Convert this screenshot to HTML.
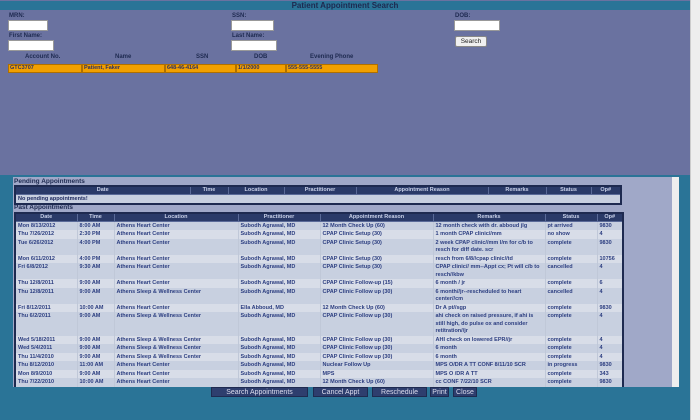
<!DOCTYPE html>
<html><head><meta charset="utf-8"><style>
*{margin:0;padding:0;box-sizing:border-box}
body{width:700px;height:420px;background:#2a7497;position:relative;overflow:hidden;font-family:"Liberation Sans",sans-serif;font-weight:bold;color:#2c3e80}
.a{position:absolute}
#top{left:0;top:0;width:690px;height:175px;background:#6a72a0}
#title{left:0;top:1px;width:690px;height:9px;background:#2a7497;text-align:center;font-size:8px;line-height:9px;color:#1e2a50}
.lbl{font-size:6px;color:#1e2a50}
.inp{background:#fff;border:1px solid #999}
#vs{left:690px;top:0;width:10px;height:420px;background:#eeeeee;border-left:1px solid #ccc}
.or{position:absolute;top:64px;height:9px;background:#f2a000;border:1px solid #b07000;font-size:5.5px;line-height:7px;padding-left:1px;color:#2c3060}
#bot{left:13px;top:177px;width:659px;height:210px;background:#a0a8c8;overflow:hidden}
#bs{left:672px;top:177px;width:7px;height:210px;background:#eeeeee}
table{border-collapse:collapse;table-layout:fixed;position:absolute;font-size:5.5px}
th{background:#2a3a68;color:#c8d0e8;border:1px solid #5a6a98;height:8px;line-height:6px;font-weight:bold}
td{border-left:1px solid #c0c8d8;padding:1px 2px 0;line-height:7.5px;height:8.5px;vertical-align:top;color:#2c3e80}
tr.o td{background:#c8d0e0} tr.e td{background:#d8dde8}
.btn{position:absolute;top:387px;height:10px;background:#2e3e6e;color:#dde;font-size:7px;line-height:10px;text-align:center;font-weight:normal;border:1px solid #1e2a50}
</style></head><body>
<div class="a" id="top"></div>
<div class="a" id="title">Patient Appointment Search</div>
<div class="a lbl" style="left:9px;top:13px">MRN:</div>
<div class="a inp" style="left:8px;top:20px;width:40px;height:11px"></div>
<div class="a lbl" style="left:9px;top:33px">First Name:</div>
<div class="a inp" style="left:8px;top:40px;width:46px;height:11px"></div>
<div class="a lbl" style="left:232px;top:13px">SSN:</div>
<div class="a inp" style="left:231px;top:20px;width:43px;height:11px"></div>
<div class="a lbl" style="left:232px;top:33px">Last Name:</div>
<div class="a inp" style="left:231px;top:40px;width:46px;height:11px"></div>
<div class="a lbl" style="left:455px;top:13px">DOB:</div>
<div class="a inp" style="left:454px;top:20px;width:46px;height:11px"></div>
<div class="a" style="left:455px;top:36px;width:32px;height:11px;background:#f0f0f0;border:1px solid #888;border-radius:2px;font-size:6.5px;font-weight:normal;color:#222;text-align:center;line-height:9px">Search</div>
<div class="a lbl" style="left:25px;top:54px">Account No.</div>
<div class="a lbl" style="left:115px;top:54px">Name</div>
<div class="a lbl" style="left:196px;top:54px">SSN</div>
<div class="a lbl" style="left:254px;top:54px">DOB</div>
<div class="a lbl" style="left:310px;top:54px">Evening Phone</div>
<div class="or" style="left:8px;width:74px">GTC3707</div>
<div class="or" style="left:82px;width:83px">Patient, Faker</div>
<div class="or" style="left:165px;width:71px">648-46-4164</div>
<div class="or" style="left:236px;width:50px">1/1/2000</div>
<div class="or" style="left:286px;width:92px">555-555-5555</div>
<div class="a" id="vs"></div>
<div class="a" id="bot">
<div class="a" style="left:1px;top:1px;font-size:6.5px;color:#1e2a50">Pending Appointments</div>
<table style="left:1px;top:8px;width:608px;border:2px solid #1e2a50">
<colgroup><col style="width:175px"><col style="width:38px"><col style="width:56px"><col style="width:72px"><col style="width:132px"><col style="width:58px"><col style="width:45px"><col style="width:30px"></colgroup>
<tr><th>Date</th><th>Time</th><th>Location</th><th>Practitioner</th><th>Appointment Reason</th><th>Remarks</th><th>Status</th><th>Op#</th></tr>
<tr class="o"><td colspan="8" style="color:#1e2a60">No pending appointments!</td></tr>
</table>
<div class="a" style="left:1px;top:27px;font-size:6.5px;color:#1e2a50">Past Appointments</div>
<table style="left:1px;top:35px;width:608px;border:2px solid #1e2a50">
<colgroup><col style="width:62px"><col style="width:37px"><col style="width:124px"><col style="width:82px"><col style="width:113px"><col style="width:112px"><col style="width:52px"><col style="width:26px"></colgroup>
<tr><th>Date</th><th>Time</th><th>Location</th><th>Practitioner</th><th>Appointment Reason</th><th>Remarks</th><th>Status</th><th>Op#</th></tr>
<tr class="o"><td>Mon 8/13/2012</td><td>8:00 AM</td><td>Athens Heart Center</td><td>Subodh Agrawal, MD</td><td>12 Month Check Up (60)</td><td>12 month check with dr. abboud jlg</td><td>pt arrived</td><td>9830</td></tr>
<tr class="e"><td>Thu 7/26/2012</td><td>2:30 PM</td><td>Athens Heart Center</td><td>Subodh Agrawal, MD</td><td>CPAP Clinic Setup (30)</td><td>1 month CPAP clinic//mm</td><td>no show</td><td>4</td></tr>
<tr class="o"><td>Tue 6/26/2012</td><td>4:00 PM</td><td>Athens Heart Center</td><td>Subodh Agrawal, MD</td><td>CPAP Clinic Setup (30)</td><td>2 week CPAP clinic//mm l/m for c/b to resch for diff date. scr</td><td>complete</td><td>9830</td></tr>
<tr class="e"><td>Mon 6/11/2012</td><td>4:00 PM</td><td>Athens Heart Center</td><td>Subodh Agrawal, MD</td><td>CPAP Clinic Setup (30)</td><td>resch from 6/8//cpap clinic//td</td><td>complete</td><td>10756</td></tr>
<tr class="o"><td>Fri 6/8/2012</td><td>9:30 AM</td><td>Athens Heart Center</td><td>Subodh Agrawal, MD</td><td>CPAP Clinic Setup (30)</td><td>CPAP clinic// mm--Appt cx; Pt will c/b to resch//kbw</td><td>cancelled</td><td>4</td></tr>
<tr class="e"><td>Thu 12/8/2011</td><td>9:00 AM</td><td>Athens Heart Center</td><td>Subodh Agrawal, MD</td><td>CPAP Clinic Follow-up (15)</td><td>6 month / jr</td><td>complete</td><td>6</td></tr>
<tr class="o"><td>Thu 12/8/2011</td><td>9:00 AM</td><td>Athens Sleep &amp; Wellness Center</td><td>Subodh Agrawal, MD</td><td>CPAP Clinic Follow up (30)</td><td>6 month//jr--rescheduled to heart center//cm</td><td>cancelled</td><td>4</td></tr>
<tr class="e"><td>Fri 8/12/2011</td><td>10:00 AM</td><td>Athens Heart Center</td><td>Ella Abboud, MD</td><td>12 Month Check Up (60)</td><td>Dr A pt//sgp</td><td>complete</td><td>9830</td></tr>
<tr class="o"><td>Thu 6/2/2011</td><td>9:00 AM</td><td>Athens Sleep &amp; Wellness Center</td><td>Subodh Agrawal, MD</td><td>CPAP Clinic Follow up (30)</td><td>ahi check on raised pressure, if ahi is still high, do pulse ox and consider retitration//jr</td><td>complete</td><td>4</td></tr>
<tr class="e"><td>Wed 5/18/2011</td><td>9:00 AM</td><td>Athens Sleep &amp; Wellness Center</td><td>Subodh Agrawal, MD</td><td>CPAP Clinic Follow up (30)</td><td>AHI check on lowered EPR//jr</td><td>complete</td><td>4</td></tr>
<tr class="o"><td>Wed 5/4/2011</td><td>9:00 AM</td><td>Athens Sleep &amp; Wellness Center</td><td>Subodh Agrawal, MD</td><td>CPAP Clinic Follow up (30)</td><td>6 month</td><td>complete</td><td>4</td></tr>
<tr class="e"><td>Thu 11/4/2010</td><td>9:00 AM</td><td>Athens Sleep &amp; Wellness Center</td><td>Subodh Agrawal, MD</td><td>CPAP Clinic Follow up (30)</td><td>6 month</td><td>complete</td><td>4</td></tr>
<tr class="o"><td>Thu 8/12/2010</td><td>11:00 AM</td><td>Athens Heart Center</td><td>Subodh Agrawal, MD</td><td>Nuclear Follow Up</td><td>MPS O/DR A TT CONF 8/11/10 SCR</td><td>in progress</td><td>9830</td></tr>
<tr class="e"><td>Mon 8/9/2010</td><td>9:00 AM</td><td>Athens Heart Center</td><td>Subodh Agrawal, MD</td><td>MPS</td><td>MPS O /DR A TT</td><td>complete</td><td>343</td></tr>
<tr class="o"><td>Thu 7/22/2010</td><td>10:00 AM</td><td>Athens Heart Center</td><td>Subodh Agrawal, MD</td><td>12 Month Check Up (60)</td><td>cc CONF 7/22/10 SCR</td><td>complete</td><td>9830</td></tr>
<tr class="e"><td>Tue 5/4/2010</td><td>11:30 AM</td><td>Athens Sleep &amp; Wellness Center</td><td>Subodh Agrawal, MD</td><td>CPAP Clinic Follow up (30)</td><td></td><td>complete</td><td>4</td></tr>
</table>
</div>
<div class="a" id="bs"></div>
<div class="btn" style="left:211px;width:97px">Search Appointments</div>
<div class="btn" style="left:313px;width:55px">Cancel Appt</div>
<div class="btn" style="left:372px;width:55px">Reschedule</div>
<div class="btn" style="left:430px;width:19px">Print</div>
<div class="btn" style="left:453px;width:24px">Close</div>
</body></html>
